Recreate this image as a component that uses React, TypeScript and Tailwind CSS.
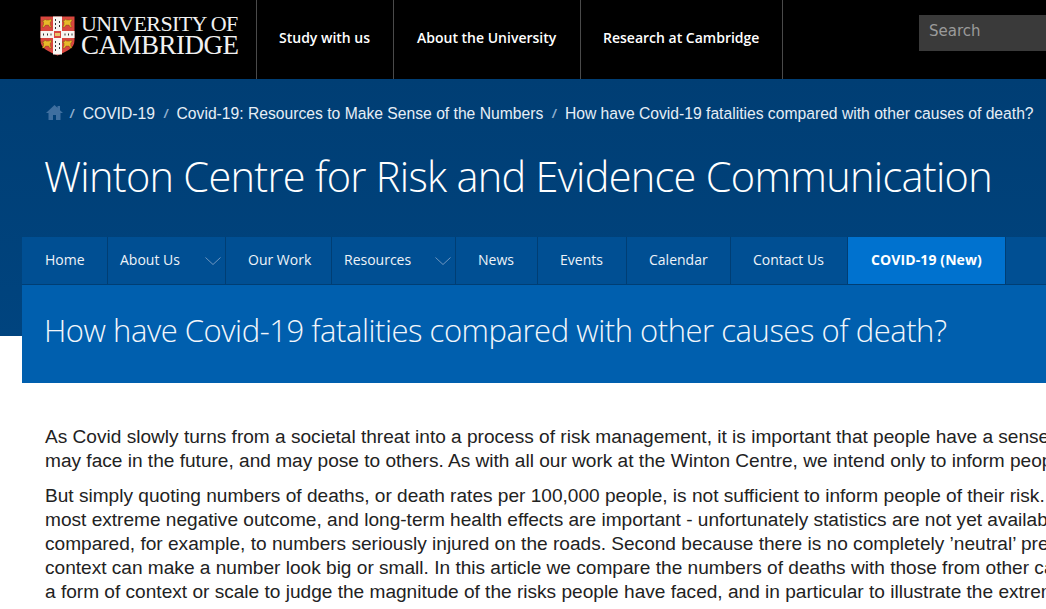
import React from 'react';

const SITE_NAV = [
  { label: 'Home', width: 'w-[85px]', pad: 'pl-[23px]' },
  { label: 'About Us', width: 'w-[118px]', pad: 'pl-[12px]', caret: true },
  { label: 'Our Work', width: 'w-[106px]', pad: 'pl-[22px]' },
  { label: 'Resources', width: 'w-[124px]', pad: 'pl-[12px]', caret: true },
  { label: 'News', width: 'w-[82px]', pad: 'pl-[22px]' },
  { label: 'Events', width: 'w-[89px]', pad: 'pl-[22px]' },
  { label: 'Calendar', width: 'w-[104px]', pad: 'pl-[22px]' },
  { label: 'Contact Us', width: 'w-[117px]', pad: 'pl-[22px]' },
];

const TOP_NAV = [
  { label: 'Study with us', width: 'w-[137px]', pad: 'pl-[22px]' },
  { label: 'About the University', width: 'w-[187px]', pad: 'pl-[23px]' },
  { label: 'Research at Cambridge', width: 'w-[202px]', pad: 'pl-[22px]' },
];

const CRUMBS = ['COVID-19', 'Covid-19: Resources to Make Sense of the Numbers', 'How have Covid-19 fatalities compared with other causes of death?'];

const Lion = ({ x, y }: { x: number; y: number }) => (
  <path
    transform={`translate(${x} ${y}) scale(1.35)`}
    d="M0 1.5h1.5l1-1.5 1 .8h2l1.5-.8.5 1.5-1 .7v2.3l1 1.5h-1.5l-.8-1.5h-2.2l-1 1.5h-1.5l1-2v-1.8z"
    fill="#e8b92a"
    stroke="#6d4a12"
    strokeWidth=".3"
  />
);

const Shield = () => (
  <svg width="35" height="40" viewBox="0 0 35 40" className="shrink-0">
    <path d="M0.5 0.5h34v24c0 8-8 11-17 15c-9-4-17-7-17-15z" fill="#d9473f" />
    <rect x="13" y="0.5" width="9" height="38" fill="#f8f6f2" />
    <rect x="0.5" y="15" width="34" height="7" fill="#f8f6f2" />
    <rect x="14" y="15" width="7" height="7" fill="#d9473f" />
    <rect x="15" y="17" width="5" height="3" fill="#e8c46a" />
    {[3, 7, 10.5, 24.5, 28, 31.5].map((x) => (
      <rect key={x} x={x} y="17.5" width="1" height="2" fill="#333" />
    ))}
    {[3, 7, 11, 25, 29, 33].map((y) => (
      <rect key={y} x="15" y={y} width="1" height="2" fill="#333" />
    ))}
    {[5, 9, 27, 31].map((y) => (
      <rect key={y} x="19" y={y} width="1" height="2" fill="#333" />
    ))}
    <Lion x={1.5} y={3} />
    <Lion x={22} y={3} />
    <Lion x={1.5} y={24} />
    <Lion x={22} y={24} />
  </svg>
);

const Crumb = () => (
  <span className="mx-[9px] text-[13px] italic font-bold text-[#8fb0cf]">/</span>
);

export default function App() {
  return (
    <div className="w-[1046px] h-[609px] overflow-hidden bg-white font-['Liberation_Sans',sans-serif]">
      <header className="h-[79px] bg-black flex">
        <div className="w-[256px] shrink-0 pl-[40px] pt-[16px] flex gap-[6px]">
          <Shield />
          <div className="font-['Liberation_Serif',serif] text-[#f1f1f1] -mt-[3px]">
            <div className="text-[22px] leading-[21px] tracking-[-0.62px] whitespace-nowrap">UNIVERSITY OF</div>
            <div className="text-[27px] leading-[22px] tracking-[-0.5px] whitespace-nowrap">CAMBRIDGE</div>
          </div>
        </div>
        {TOP_NAV.map((item) => (
          <div
            key={item.label}
            className={`${item.width} ${item.pad} shrink-0 border-l border-[#4a4a4a] flex items-center font-['Open_Sans',sans-serif] text-[14px] font-semibold text-white pb-[5px] whitespace-nowrap`}
          >
            {item.label}
          </div>
        ))}
        <div className="flex-1 border-l border-[#4a4a4a] flex justify-end pt-[15px]">
          <div className="w-[127px] h-[36px] bg-[#3a3a3a] pl-[10px] pb-[4px] flex items-center font-['DejaVu_Sans',sans-serif] text-[15px] text-[#9a9a9a]">
            Search
          </div>
        </div>
      </header>

      <section className="h-[257px] bg-gradient-to-b from-[#003e74] to-[#00447f]">
        <nav className="flex items-center pt-[24px] pl-[46px] h-[45px] text-[15.68px] text-[#e6eef6] whitespace-nowrap">
          <svg width="17" height="15" viewBox="0 0 17 15" fill="#3f6f9f" className="mb-[3px] -mr-[2px]">
            <path d="M8.5 0L0 8h2.5v7h4.5v-5h3v5h4.5V8H17L14 5.2V1h-2.5v1.8z" />
          </svg>
          <Crumb />
          {CRUMBS.map((crumb, i) => (
            <React.Fragment key={crumb}>
              <span>{crumb}</span>
              {i < CRUMBS.length - 1 && <Crumb />}
            </React.Fragment>
          ))}
        </nav>
        <h1 className="mt-[22px] ml-[44px] font-['Open_Sans',sans-serif] font-light text-[41.5px] leading-[60px] tracking-[-0.72px] text-white whitespace-nowrap">
          Winton Centre for Risk and Evidence Communication
        </h1>
        <div className="ml-[22px] mt-[31px]">
          <div className="flex h-[48px] bg-[#004f93] border-b border-[#003e74] font-['Open_Sans',sans-serif] text-[14px] text-[#eef3f8]">
            {SITE_NAV.map((item, i) => (
              <div
                key={item.label}
                className={`${item.width} ${item.pad} shrink-0 relative flex items-center pb-[2px] whitespace-nowrap ${i > 0 ? 'border-l border-[#003e74]' : ''}`}
              >
                {item.label}
                {item.caret && (
                  <svg width="16" height="8" viewBox="0 0 16 8" fill="none" stroke="#6f97c0" className="absolute right-[4px] top-[20px]">
                    <path d="M0.5 0.5L8 7.5L15.5 0.5" />
                  </svg>
                )}
              </div>
            ))}
            <div className="w-[159px] shrink-0 flex items-center justify-center pb-[2px] bg-[#0072cf] border-l border-r border-[#003e74] font-bold text-white whitespace-nowrap tracking-[0.1px]">
              COVID-19 (New)
            </div>
          </div>
          <div className="h-[98px] bg-[#005fae] pl-[22px] pt-[17px] font-['Open_Sans',sans-serif] font-light text-[31px] leading-[56px] tracking-[-0.46px] text-[#f2f6fb] whitespace-nowrap">
            How have Covid-19 fatalities compared with other causes of death?
          </div>
        </div>
      </section>

      <main className="pl-[45px] pt-[89px] text-[19.08px] leading-[24px] text-[#222] whitespace-nowrap">
        <p className="mb-[11px]">
          As Covid slowly turns from a societal threat into a process of risk management, it is important that people have a sense of the risks they
          <br />
          may face in the future, and may pose to others. As with all our work at the Winton Centre, we intend only to inform people, not persuade them.
        </p>
        <p>
          But simply quoting numbers of deaths, or death rates per 100,000 people, is not sufficient to inform people of their risk. First because death is the
          <br />
          most extreme negative outcome, and long-term health effects are important - unfortunately statistics are not yet available on these, which could be
          <br />
          compared, for example, to numbers seriously injured on the roads. Second because there is no completely ’neutral’ presentation of numbers:
          <br />
          context can make a number look big or small. In this article we compare the numbers of deaths with those from other causes, in order to provide
          <br />
          a form of context or scale to judge the magnitude of the risks people have faced, and in particular to illustrate the extreme variation with age.
        </p>
      </main>
    </div>
  );
}
